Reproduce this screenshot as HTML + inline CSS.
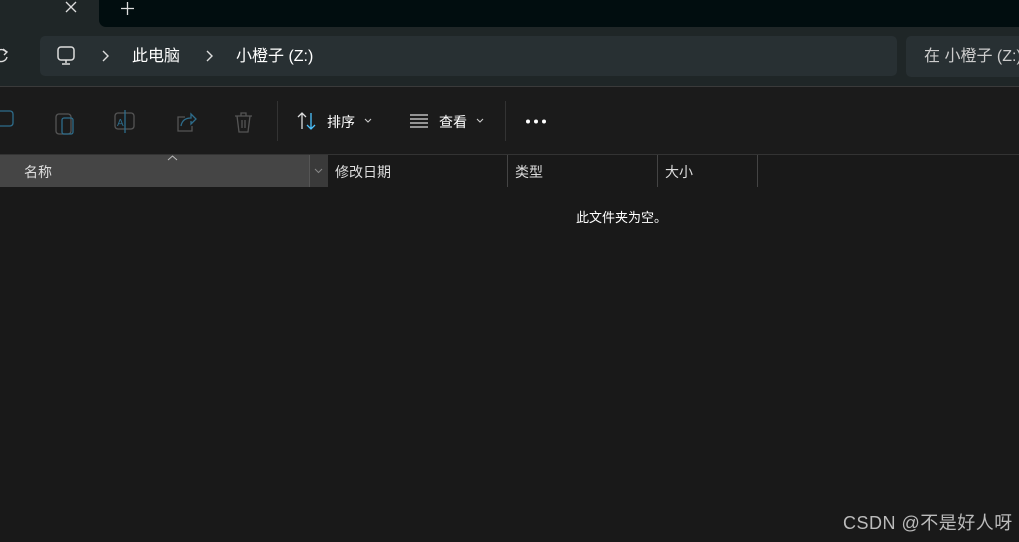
<!DOCTYPE html>
<html><head><meta charset="utf-8"><style>
*{margin:0;padding:0;box-sizing:border-box}
body{width:1019px;height:542px;overflow:hidden;background:#191919;font-family:"Liberation Sans","Noto Sans CJK SC",sans-serif;color:#fff;position:relative}
.a{position:absolute}
.t{font-size:14px;white-space:nowrap;line-height:1.2}
</style></head><body>
<div class="a" style="left:0;top:0;width:1019px;height:87px;background:#1f2627"></div>
<div class="a" style="left:99px;top:0;width:920px;height:27px;background:#010d0f;border-bottom-left-radius:7px"></div>
<svg class="a" style="left:65px;top:1px" width="12" height="12"><path d="M1 1l10 10M11 1L1 11" stroke="#ddd" stroke-width="1.3"/></svg>
<svg class="a" style="left:121px;top:2px" width="13" height="13"><path d="M6.5 0v13M0 6.5h13" stroke="#ddd" stroke-width="1.3"/></svg>
<svg class="a" style="left:-6px;top:47px" width="16" height="18"><path d="M12 5a6 6 0 1 0 1 5" stroke="#ddd" stroke-width="1.4" fill="none"/><path d="M9 2l4 3-3 3" stroke="#ddd" stroke-width="1.4" fill="none"/></svg>
<div class="a" style="left:40px;top:36px;width:857px;height:40px;background:#283033;border-radius:5px"></div>
<div class="a" style="left:906px;top:36px;width:120px;height:41px;background:#283033;border-radius:5px"></div>
<svg class="a" style="left:55px;top:45px" width="22" height="22" viewBox="0 0 22 22"><rect x="3" y="2" width="16" height="13" rx="3" fill="none" stroke="#ddd" stroke-width="1.5"/><path d="M11 15v3M7 19h8" stroke="#ddd" stroke-width="1.5"/></svg>
<svg class="a" style="left:101px;top:50px" width="8" height="12"><path d="M2 1l5 5-5 5" stroke="#ddd" stroke-width="1.4" fill="none"/></svg>
<div class="a t" style="left:132px;top:47px;font-size:16px">此电脑</div>
<svg class="a" style="left:205px;top:50px" width="8" height="12"><path d="M2 1l5 5-5 5" stroke="#ddd" stroke-width="1.4" fill="none"/></svg>
<div class="a t" style="left:236px;top:47px;font-size:16px">小橙子 (Z:)</div>
<div class="a t" style="left:924px;top:47px;font-size:16px;color:#ccc">在 小橙子 (Z:)</div>
<div class="a" style="left:0;top:86px;width:1019px;height:1px;background:#3a3a3a"></div>
<div class="a" style="left:0;top:87px;width:1019px;height:67px;background:#1b1b1b"></div>
<svg class="a" style="left:0;top:105px" width="270" height="32" viewBox="0 0 270 32">
<g fill="none" stroke-width="1.3">
<rect x="-4" y="6" width="17" height="15" rx="3" stroke="#2e6d8c"/>
<rect x="56" y="9" width="15" height="20" rx="3" stroke="#555"/><rect x="62" y="13" width="11" height="16" rx="2" stroke="#2e6d8c"/>
<rect x="115" y="8" width="19" height="16" rx="3" stroke="#555"/><path d="M125 5v23" stroke="#2e6d8c"/><text x="117" y="21" font-size="10" fill="#2e6d8c" stroke="none" font-family="Liberation Sans">A</text>
<path d="M185 12h-7v14h14v-5" stroke="#555"/><path d="M181 21c1-6 5-8 10-8v-4l5 5-5 5v-3" stroke="#2e6d8c"/>
<path d="M235 11h17M241 11v-3h5v3M237 11l2 16h9l2-16M242 15v8M245 15v8" stroke="#555"/>
</g></svg>
<div class="a" style="left:277px;top:101px;width:1px;height:40px;background:#333"></div>
<div class="a" style="left:505px;top:101px;width:1px;height:40px;background:#333"></div>
<svg class="a" style="left:296px;top:111px" width="22" height="20" viewBox="0 0 22 20"><path d="M6 18V2M2 6l4-4 4 4" stroke="#ddd" stroke-width="1.3" fill="none"/><path d="M15 2v16M11 14l4 4 4-4" stroke="#4cc2ff" stroke-width="1.3" fill="none"/></svg>
<div class="a t" style="left:327px;top:114px">排序</div>
<svg class="a" style="left:364px;top:118px" width="8" height="6"><path d="M1 1l3 3 3-3" stroke="#ccc" stroke-width="1.1" fill="none"/></svg>
<svg class="a" style="left:409px;top:113px" width="20" height="16"><path d="M1 2h18M1 6h18M1 10h18M1 14h18" stroke="#ddd" stroke-width="1.2"/></svg>
<div class="a t" style="left:439px;top:114px">查看</div>
<svg class="a" style="left:476px;top:118px" width="8" height="6"><path d="M1 1l3 3 3-3" stroke="#ccc" stroke-width="1.1" fill="none"/></svg>
<svg class="a" style="left:525px;top:118px" width="24" height="8"><circle cx="3" cy="3.5" r="2" fill="#fff"/><circle cx="11" cy="3.5" r="2" fill="#fff"/><circle cx="19" cy="3.5" r="2" fill="#fff"/></svg>
<div class="a" style="left:0;top:154px;width:1019px;height:1px;background:#333"></div>
<div class="a" style="left:0;top:155px;width:309px;height:32px;background:#454545"></div>
<div class="a" style="left:309px;top:155px;width:19px;height:32px;background:#3a3a3a;border-left:1px solid #555"></div>
<svg class="a" style="left:314px;top:168px" width="9" height="6"><path d="M1 1l3.5 3.5L8 1" stroke="#888" stroke-width="1" fill="none"/></svg>
<svg class="a" style="left:167px;top:155px" width="11" height="6"><path d="M1 5l4.5-4L10 5" stroke="#bbb" stroke-width="1" fill="none"/></svg>
<div class="a t" style="left:24px;top:164px;color:#ddd">名称</div>
<div class="a t" style="left:335px;top:164px;color:#ddd">修改日期</div>
<div class="a" style="left:507px;top:155px;width:1px;height:32px;background:#444"></div>
<div class="a t" style="left:515px;top:164px;color:#ddd">类型</div>
<div class="a" style="left:657px;top:155px;width:1px;height:32px;background:#444"></div>
<div class="a t" style="left:665px;top:164px;color:#ddd">大小</div>
<div class="a" style="left:757px;top:155px;width:1px;height:32px;background:#444"></div>
<div class="a t" style="left:576px;top:210px;font-size:13px">此文件夹为空。</div>
<div class="a t" style="left:843px;top:513px;font-size:18px;letter-spacing:0.5px;color:#bbb">CSDN @不是好人呀</div>
</body></html>
